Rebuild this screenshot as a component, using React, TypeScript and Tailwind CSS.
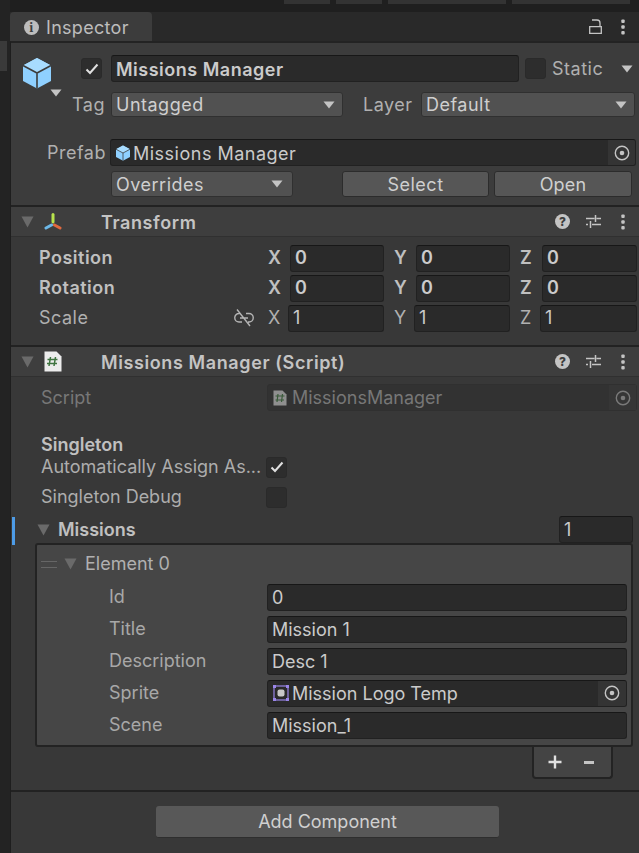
import React from "react";

const Caret = ({ className = "" }: { className?: string }) => (
  <svg width="12" height="8" viewBox="0 0 12 8" className={className}>
    <path d="M0.5 0.5H11.5L6 7.5Z" fill="currentColor" />
  </svg>
);

const Foldout = ({ className = "" }: { className?: string }) => (
  <svg width="13" height="12" viewBox="0 0 13 12" className={`shrink-0 text-[#6a6a6a] ${className}`}>
    <path d="M0.5 0.5H12.5L6.5 11.5Z" fill="currentColor" />
  </svg>
);

const Target = ({ dim = false }: { dim?: boolean }) => (
  <svg width="16" height="16" viewBox="0 0 16 16" className={dim ? "text-[#7a7a7a]" : "text-[#c4c4c4]"}>
    <circle cx="8" cy="8" r="6.7" fill="none" stroke="currentColor" strokeWidth="1.4" />
    <circle cx="8" cy="8" r="2.3" fill="currentColor" />
  </svg>
);

const Cube = ({ size }: { size: number }) => (
  <svg width={size} height={size} viewBox="0 0 32 32">
    <path d="M16 1L30 8.5V24L16 31.5L2 24V8.5Z" fill="#8fd0ff" />
    <path d="M16 1L30 8.5L16 16L2 8.5Z" fill="#a8dcff" />
    <path d="M16 16V31.5M16 16L2 8.5M16 16L30 8.5" stroke="#3c3c3c" strokeWidth="1.6" fill="none" />
  </svg>
);

const Kebab = () => (
  <svg width="4" height="16" viewBox="0 0 4 16" className="text-[#c4c4c4]">
    <rect x="0.3" y="0.5" width="3.4" height="3.4" rx="1" fill="currentColor" />
    <rect x="0.3" y="6.3" width="3.4" height="3.4" rx="1" fill="currentColor" />
    <rect x="0.3" y="12.1" width="3.4" height="3.4" rx="1" fill="currentColor" />
  </svg>
);

const HeaderTools = () => (
  <div className="ml-auto flex items-center pr-[14px]">
    <div className="flex h-[15px] w-[15px] items-center justify-center rounded-full bg-[#c4c4c4] text-[12px] font-extrabold leading-none tracking-normal text-[#3e3e3e]">
      ?
    </div>
    <svg width="15" height="15" viewBox="0 0 15 15" className="ml-[16px] text-[#c4c4c4]">
      <path d="M0 4.5H8.5M10.5 4.5H15M9.5 1V8M0 10.5H2M6 10.5H15M4.5 7V14" stroke="currentColor" strokeWidth="1.5" fill="none" />
    </svg>
    <div className="ml-[20px]">
      <Kebab />
    </div>
  </div>
);

const InsetField = ({ children, className = "" }: { children?: React.ReactNode; className?: string }) => (
  <div
    className={`flex h-[27px] items-center overflow-hidden rounded-[3px] border border-[#212121] border-t-[#171717] bg-[#2a2a2a] pl-[4px] text-[#cbcbcb] ${className}`}
  >
    {children}
  </div>
);

const Dropdown = ({ label, className = "" }: { label: string; className?: string }) => (
  <div
    className={`flex h-[25px] items-center justify-between rounded-[3px] border border-[#303030] bg-[#515151] pl-[4px] pr-[7px] text-[#cfcfcf] ${className}`}
  >
    <span className="pt-[1px]">{label}</span>
    <Caret className="text-[#c4c4c4]" />
  </div>
);

const Check = () => (
  <svg width="14" height="12" viewBox="0 0 14 12" className="text-[#e0e0e0]">
    <path d="M1.5 6.5L5 10L12.5 1.5" stroke="currentColor" strokeWidth="2" fill="none" />
  </svg>
);

const Checkbox = ({ checked = false }: { checked?: boolean }) => (
  <div className="flex h-[21px] w-[21px] shrink-0 items-center justify-center rounded-[3px] border border-[#2a2a2a] bg-[#2d2d2d]">
    {checked && <Check />}
  </div>
);

const ComponentHeader = ({ title, icon }: { title: string; icon: React.ReactNode }) => (
  <div className="flex h-[30px] shrink-0 items-center border-b border-[#303030] bg-[#3e3e3e]">
    <Foldout className="ml-[10px]" />
    <div className="ml-[9px] flex w-[20px] justify-center">{icon}</div>
    <span className="ml-[38px] pt-[2px] font-semibold tracking-[0.6px] text-[#c4c4c4]">{title}</span>
    <HeaderTools />
  </div>
);

const VectorRow = ({ label, value, bold = false, unlink = false }: { label: string; value: string; bold?: boolean; unlink?: boolean }) => {
  const weight = bold ? "font-semibold" : "";
  return (
    <div className={`flex h-[30px] items-center pl-[28px] pr-[2px] ${weight} ${bold ? "text-[#c0c0c0]" : "text-[#b0b0b0]"}`}>
      <span className="flex-1">{label}</span>
      {unlink && (
        <svg width="20" height="18" viewBox="0 0 20 18" className="mr-[14px] text-[#b4b4b4]">
          <path d="M6 4.5H5A4.2 4.2 0 0 0 5 13H8M12 4.5H15A4.2 4.2 0 0 1 15 13H14M6 9H14M3 0.5L16 17" stroke="currentColor" strokeWidth="1.4" fill="none" />
        </svg>
      )}
      <div className="grid w-[369px] grid-cols-[116px_116px_117px] gap-x-[10px]">
        {["X", "Y", "Z"].map((axis) => (
          <div key={axis} className="flex items-center">
            <span className={unlink ? "w-[20px]" : "w-[22px]"}>{axis}</span>
            <InsetField className={`min-w-0 flex-1 ${weight}`}>{value}</InsetField>
          </div>
        ))}
      </div>
    </div>
  );
};

const ElementRow = ({ label, children }: { label: string; children: React.ReactNode }) => (
  <div className="flex h-[32px] items-center pr-[4px]">
    <span className="w-[230px] pl-[72px] text-[#a8a8a8]">{label}</span>
    <div className="min-w-0 flex-1">{children}</div>
  </div>
);

export default function App() {
  return (
    <div
      className="flex h-[853px] w-[639px] overflow-hidden bg-[#232323] text-[18px] leading-none tracking-[0.5px]"
      style={{ fontFamily: "Inter, 'Liberation Sans', sans-serif" }}
    >
      {/* sliver of the neighbouring window */}
      <div className="w-[10px] shrink-0 pt-[41px]">
        <div className="h-[30px] w-[7px] bg-[#3a3a3a]" />
      </div>

      <div className="flex min-w-0 flex-1 flex-col">
        <div className="relative h-[12px] shrink-0 bg-[#1f1f1f]">
          <div className="absolute right-[9px] top-0 flex gap-[6px]">
            <div className="h-[4px] w-[46px] bg-[#333333]" />
            <div className="h-[4px] w-[46px] bg-[#333333]" />
            <div className="h-[4px] w-[118px] bg-[#333333]" />
            <div className="h-[4px] w-[118px] bg-[#333333]" />
          </div>
        </div>

        {/* tab bar */}
        <div className="flex h-[29px] shrink-0 items-stretch bg-[#292929]">
          <div className="flex w-[142px] items-center rounded-t-[4px] bg-[#3c3c3c] pl-[14px] pt-[1px] tracking-[0.3px] text-[#bdbdbd]">
            <div className="flex h-[15px] w-[15px] items-center justify-center rounded-full bg-[#bdbdbd] font-serif text-[13px] font-black text-[#3c3c3c]">
              i
            </div>
            <span className="ml-[7px] pt-[1px]">Inspector</span>
          </div>
          <div className="ml-auto flex items-center pr-[14px]">
            <svg width="13" height="15" viewBox="0 0 13 15" className="text-[#c4c4c4]">
              <path d="M0.7 7.7H12.3V14.3H0.7ZM3 1H8A3 3 0 0 1 11 4V7.5" stroke="currentColor" strokeWidth="1.3" fill="none" />
            </svg>
            <div className="ml-[19px]">
              <Kebab />
            </div>
          </div>
        </div>

        <div className="flex min-h-0 flex-1 flex-col border-l border-[#1e1e1e] border-t-2 border-t-[#232323] bg-[#383838]">
          {/* game object header */}
          <div className="h-[164px] shrink-0 border-b-2 border-[#222222] bg-[#3c3c3c] pt-[12px]">
            <div className="flex h-[27px] items-center pr-[6px]">
              <div className="relative ml-[10px] h-[32px] w-[32px] translate-y-[4px]">
                <Cube size={32} />
                <Caret className="absolute left-[29px] top-[32px] text-[#c4c4c4]" />
              </div>
              <div className="ml-[28px]">
                <Checkbox checked />
              </div>
              <InsetField className="ml-[9px] w-[408px] pt-[2px] font-semibold">Missions Manager</InsetField>
              <div className="ml-[6px]">
                <Checkbox />
              </div>
              <span className="ml-[6px] pt-[1px] text-[#b0b0b0]">Static</span>
              <Caret className="ml-auto text-[#c4c4c4]" />
            </div>
            <div className="mt-[10px] flex h-[25px] items-center text-[#b0b0b0]">
              <span className="w-[100px] pl-[61px] pt-[1px]">Tag</span>
              <Dropdown label="Untagged" className="w-[232px]" />
              <span className="ml-[20px] w-[58px] pt-[1px]">Layer</span>
              <Dropdown label="Default" className="w-[214px]" />
            </div>
            <div className="mt-[22px] flex h-[27px] items-center pr-[3px]">
              <span className="w-[99px] pl-[36px] pt-[1px] text-[#b0b0b0]">Prefab</span>
              <InsetField className="flex-1 pl-[4px] pr-0">
                <Cube size={16} />
                <span className="ml-[2px] pt-[2px]">Missions Manager</span>
                <div className="ml-auto flex h-full w-[27px] items-center justify-center bg-[#343434]">
                  <Target />
                </div>
              </InsetField>
            </div>
            <div className="mt-[5px] flex h-[26px] items-center">
              <Dropdown label="Overrides" className="ml-[100px] h-[26px] w-[182px] pr-[9px]" />
              <div className="ml-[49px] flex h-[26px] w-[147px] items-center justify-center rounded-[3px] border border-[#2c2c2c] bg-[#565656] pt-[1px] text-[#cfcfcf]">
                Select
              </div>
              <div className="ml-[5px] flex h-[26px] w-[138px] items-center justify-center rounded-[3px] border border-[#2c2c2c] bg-[#565656] pt-[1px] tracking-[0.2px] text-[#cfcfcf]">
                Open
              </div>
            </div>
          </div>

          {/* transform */}
          <ComponentHeader
            title="Transform"
            icon={
              <svg width="18" height="18" viewBox="0 0 18 18">
                <path d="M9 1.5V9" stroke="#b8e34d" strokeWidth="3" strokeLinecap="round" />
                <path d="M7.5 12L2 15" stroke="#6cb8e8" strokeWidth="3" strokeLinecap="round" />
                <path d="M10.5 12L16 15" stroke="#e0693f" strokeWidth="3" strokeLinecap="round" />
              </svg>
            }
          />
          <div className="h-[110px] shrink-0 border-b-2 border-[#222222] pt-[6px]">
            <VectorRow label="Position" value="0" bold />
            <VectorRow label="Rotation" value="0" bold />
            <VectorRow label="Scale" value="1" unlink />
          </div>

          {/* script */}
          <ComponentHeader
            title="Missions Manager (Script)"
            icon={
              <svg width="18" height="21" viewBox="0 0 18 21">
                <path d="M0.5 0.5H12.5L17.5 5.5V20.5H0.5Z" fill="#ececec" />
                <path d="M6.5 6L5 15M11.5 6L10 15M3.5 8.5H13.5M3 12.5H13" stroke="#3f7440" strokeWidth="1.5" fill="none" />
              </svg>
            }
          />
          <div className="flex min-h-0 flex-1 flex-col border-b-2 border-[#222222] tracking-normal">
            <div className="mt-[7px] flex h-[27px] items-center pr-[2px] text-[#777777]">
              <span className="w-[256px] pl-[30px]">Script</span>
              <div className="flex h-[27px] flex-1 items-center rounded-[3px] border border-[#303030] bg-[#323232] pl-[5px]">
                <svg width="14" height="16" viewBox="0 0 14 16">
                  <path d="M0.5 0.5H9.5L13.5 4.5V15.5H0.5Z" fill="#8f8f8f" />
                  <path d="M5 4L4 12M9.5 4L8.5 12M2.5 6H11.5M2.5 10H11" stroke="#3a5a3a" strokeWidth="1.2" fill="none" />
                </svg>
                <span className="ml-[5px] pt-[1px]">MissionsManager</span>
                <div className="ml-auto flex h-full w-[27px] items-center justify-center bg-[#363636]">
                  <Target dim />
                </div>
              </div>
            </div>

            <div className="mt-[25px] h-[18px] pl-[30px] font-semibold text-[#c0c0c0]">Singleton</div>
            <div className="flex h-[26px] items-center text-[#adadad]">
              <span className="w-[255px] whitespace-nowrap pl-[30px]">Automatically Assign As...</span>
              <Checkbox checked />
            </div>
            <div className="mt-[4px] flex h-[26px] items-center text-[#adadad]">
              <span className="w-[255px] whitespace-nowrap pl-[30px]">Singleton Debug</span>
              <Checkbox />
            </div>

            <div className="relative mt-[6px] flex h-[27px] items-center">
              <div className="absolute left-[1px] top-[1px] h-[28px] w-[3px] bg-[#4d9be6]" />
              <Foldout className="ml-[26px]" />
              <span className="ml-[8px] font-semibold text-[#c0c0c0]">Missions</span>
              <InsetField className="ml-auto mr-[6px] w-[74px] pl-[4px]">1</InsetField>
            </div>

            <div className="ml-[24px] mr-[6px] h-[204px] shrink-0 rounded-[3px] border-2 border-[#232323] bg-[#464646] pt-[5px]">
              <div className="mb-[3px] flex h-[28px] items-center">
                <div className="ml-[4px] flex w-[16px] flex-col gap-[5px]">
                  <div className="h-px bg-[#666666]" />
                  <div className="h-px bg-[#666666]" />
                </div>
                <Foldout className="ml-[7px]" />
                <span className="ml-[8px] text-[#b0b0b0]">Element 0</span>
              </div>
              <ElementRow label="Id">
                <InsetField className="pt-[1px]">0</InsetField>
              </ElementRow>
              <ElementRow label="Title">
                <InsetField className="pt-[1px]">Mission 1</InsetField>
              </ElementRow>
              <ElementRow label="Description">
                <InsetField className="pt-[1px]">Desc 1</InsetField>
              </ElementRow>
              <ElementRow label="Sprite">
                <InsetField className="pl-[5px]">
                  <svg width="16" height="16" viewBox="0 0 16 16" className="shrink-0">
                    <rect x="1" y="1" width="14" height="14" fill="none" stroke="#9a86e8" strokeWidth="1.2" />
                    <path d="M0 0H3V3H0ZM13 0H16V3H13ZM0 13H3V16H0ZM13 13H16V16H13Z" fill="#9a86e8" />
                    <rect x="4.5" y="4.5" width="7" height="7" rx="2" fill="#c8c8c8" />
                  </svg>
                  <span className="ml-[3px] whitespace-nowrap pt-[2px]">Mission Logo Temp</span>
                  <div className="ml-auto flex h-full w-[28px] items-center justify-center bg-[#343434]">
                    <Target />
                  </div>
                </InsetField>
              </ElementRow>
              <ElementRow label="Scene">
                <InsetField className="pt-[1px]">Mission_1</InsetField>
              </ElementRow>
            </div>

            <div className="ml-[521px] flex h-[32px] w-[81px] shrink-0 items-center rounded-b-[4px] border-2 border-t-0 border-[#232323] bg-[#444444] text-[#e0e0e0]">
              <svg width="14" height="14" viewBox="0 0 14 14" className="ml-[14px]">
                <path d="M7 0.5V13.5M0.5 7H13.5" stroke="currentColor" strokeWidth="2.4" />
              </svg>
              <svg width="10" height="3" viewBox="0 0 10 3" className="ml-[22px] text-[#c4c4c4]">
                <rect width="10" height="3" fill="currentColor" />
              </svg>
            </div>
          </div>

          {/* add component */}
          <div className="flex h-[61px] shrink-0 justify-center pl-[5px] pt-[14px] tracking-normal">
            <div className="flex h-[32px] w-[343px] items-center justify-center rounded-[3px] border-b border-[#2e2e2e] bg-[#585858] text-[#d0d0d0]">
              Add Component
            </div>
          </div>
        </div>
      </div>
    </div>
  );
}
